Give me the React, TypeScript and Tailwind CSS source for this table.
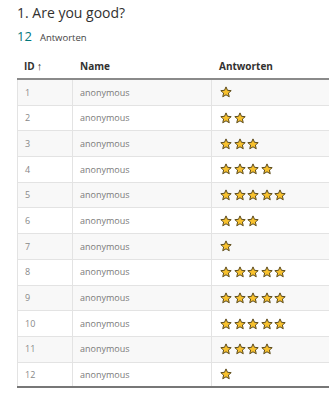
import React from "react";

const data = [1, 2, 3, 4, 5, 3, 1, 5, 5, 5, 4, 1];

function Star() {
  return (
    <svg width="12" height="12" viewBox="0 0 24 24" className="shrink-0">
      <polygon
        points="12,1.8 15,8.6 22.4,9.3 16.8,14.2 18.5,21.5 12,17.6 5.5,21.5 7.2,14.2 1.6,9.3 9,8.6"
        fill="#f8c12d"
        stroke="#5b4a1c"
        strokeWidth="2"
        strokeLinejoin="round"
      />
    </svg>
  );
}

export default function App() {
  return (
    <div
      className="w-[329px] h-[400px] overflow-hidden bg-white pl-[17px]"
      style={{ fontFamily: '"Open Sans", "Noto Sans", sans-serif' }}
    >
      <div className="pt-[3px] text-[14px] leading-[20px] text-[#323130]">1. Are you good?</div>
      <div className="mt-[4px] flex items-baseline h-[18px]">
        <span className="text-[13px] text-[#03787c]">12</span>
        <span className="ml-[8px] text-[9.5px] text-[#444]">Antworten</span>
      </div>
      <div className="w-[400px]">
        <div className="flex h-[25px] items-center text-[10px] font-bold text-[#323130] border-b-2 border-[#8a8a8a] mt-[10px]">
          <div className="w-[55px] pl-[7px] flex items-center">ID<span className="ml-[2px] font-normal text-[11px]">↑</span></div>
          <div className="w-[139px] pl-[8px]">Name</div>
          <div className="pl-[8px]">Antworten</div>
        </div>
        {data.map((n, i) => (
          <div
            key={i}
            className={`flex h-[25.7px] border-b border-[#e3e3e3] text-[9px] ${i % 2 === 0 ? "bg-[#f8f8f8]" : "bg-white"} ${i === data.length - 1 ? "border-b-2 border-b-[#777777]" : ""}`}
          >
            <div className="w-[55px] pl-[7px] flex items-center border-l border-[#e3e3e3] text-[#888888]">{i + 1}</div>
            <div className="w-[139px] pl-[7px] flex items-center border-l border-[#e3e3e3] text-[#7a7a7a]">anonymous</div>
            <div className="flex-1 pl-[8px] flex items-center gap-[1.5px] border-l border-[#e3e3e3]">
              {Array.from({ length: n }).map((_, k) => (
                <Star key={k} />
              ))}
            </div>
          </div>
        ))}
      </div>
    </div>
  );
}
